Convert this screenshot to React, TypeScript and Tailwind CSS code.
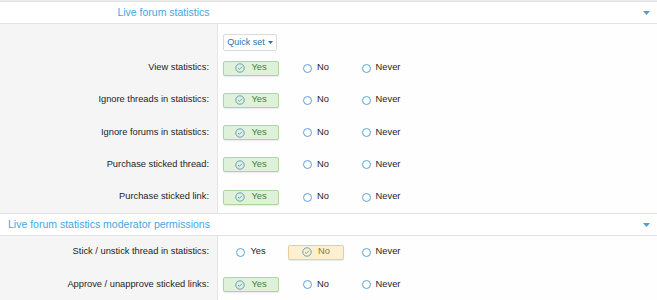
import React from "react"

type Choice = "yes" | "no" | "never"

const sections: { title: string; centered?: boolean; quickSet?: boolean; rows: { label: string; value: Choice }[] }[] = [
  {
    title: "Live forum statistics",
    centered: true,
    quickSet: true,
    rows: [
      { label: "View statistics:", value: "yes" },
      { label: "Ignore threads in statistics:", value: "yes" },
      { label: "Ignore forums in statistics:", value: "yes" },
      { label: "Purchase sticked thread:", value: "yes" },
      { label: "Purchase sticked link:", value: "yes" },
    ],
  },
  {
    title: "Live forum statistics moderator permissions",
    rows: [
      { label: "Stick / unstick thread in statistics:", value: "no" },
      { label: "Approve / unapprove sticked links:", value: "yes" },
    ],
  },
]

function CheckCircle() {
  return (
    <svg width="10" height="10" viewBox="0 0 10 10" className="shrink-0">
      <circle cx="5" cy="5" r="4.2" fill="none" stroke="#5f95c2" strokeWidth="0.9" />
      <path d="M3 5.1 L4.4 6.4 L7 3.7" fill="none" stroke="#5f95c2" strokeWidth="0.9" />
    </svg>
  )
}

function Option({ label, selected, tone }: { label: string; selected: boolean; tone: Choice }) {
  if (selected) {
    const styles =
      tone === "no"
        ? "bg-[#fdefd2] border-[#efcd90] text-[#9c7040]"
        : "bg-[#dff1d8] border-[#aed7a0] text-[#43803c]"
    return (
      <div
        className={`w-[56px] h-[15px] flex items-center justify-center gap-[6px] border rounded-[2px] shadow-[0_1px_1px_rgba(0,0,0,0.08)] ${styles}`}
      >
        <CheckCircle />
        <span>{label}</span>
      </div>
    )
  }
  return (
    <div className="w-[56px] h-[15px] flex items-center justify-center gap-[5px]">
      <span className="w-[9px] h-[9px] rounded-full border border-[#5ba4d8] bg-white shrink-0" />
      <span className="text-[#1d1d1d]">{label}</span>
    </div>
  )
}

function Caret() {
  return (
    <svg width="7" height="4" viewBox="0 0 7 4">
      <path d="M0 0 H7 L3.5 4 Z" fill="#4a9fd8" />
    </svg>
  )
}

export default function App() {
  return (
    <div
      className="w-[657px] h-[300px] overflow-hidden bg-[#f5f5f5] text-[9.3px] text-[#1d1d1d]"
      style={{ fontFamily: '"Liberation Sans", Arial, sans-serif' }}
    >
      <div className="h-[2px] bg-[#ececec] border-b border-[#e2e2e2]" />
      {sections.map((section, i) => (
        <div key={section.title}>
          <div
            className={`flex items-center bg-white border-b border-[#e3e3e3] ${i > 0 ? "h-[23px] border-t" : "h-[22px]"}`}
          >
            <div
              className={`text-[10.5px] text-[#47a5e2] ${section.centered ? "w-[327px] text-center" : "pl-2"}`}
            >
              {section.title}
            </div>
            <div className="ml-auto mr-[7px] flex">
              <Caret />
            </div>
          </div>

          {section.quickSet && (
            <div className="flex h-[28px]">
              <div className="w-[217px]" />
              <div className="flex-1 bg-[#fefefe] border-l border-[#e5e5e5] pl-[5px] pt-[10px]">
                <button className="h-[17px] w-[54px] flex items-center justify-center gap-[3px] bg-white border border-[#dadada] rounded-[2px] text-[#2e73a8] text-[9px]">
                  Quick set
                  <svg width="5" height="3" viewBox="0 0 5 3">
                    <path d="M0 0 H5 L2.5 3 Z" fill="#2e73a8" />
                  </svg>
                </button>
              </div>
            </div>
          )}

          {section.rows.map((row) => (
            <div key={row.label} className="flex h-[32.25px]">
              <div className="w-[217px] flex items-center justify-end pr-2 text-[#1d1d1d]">{row.label}</div>
              <div className="flex-1 bg-[#fefefe] border-l border-[#e5e5e5] pl-[5px] flex items-center gap-[9px]">
                <Option label="Yes" selected={row.value === "yes"} tone="yes" />
                <Option label="No" selected={row.value === "no"} tone="no" />
                <Option label="Never" selected={row.value === "never"} tone="never" />
              </div>
            </div>
          ))}
        </div>
      ))}
      <div className="border-t border-[#e3e3e3]" />
    </div>
  )
}
